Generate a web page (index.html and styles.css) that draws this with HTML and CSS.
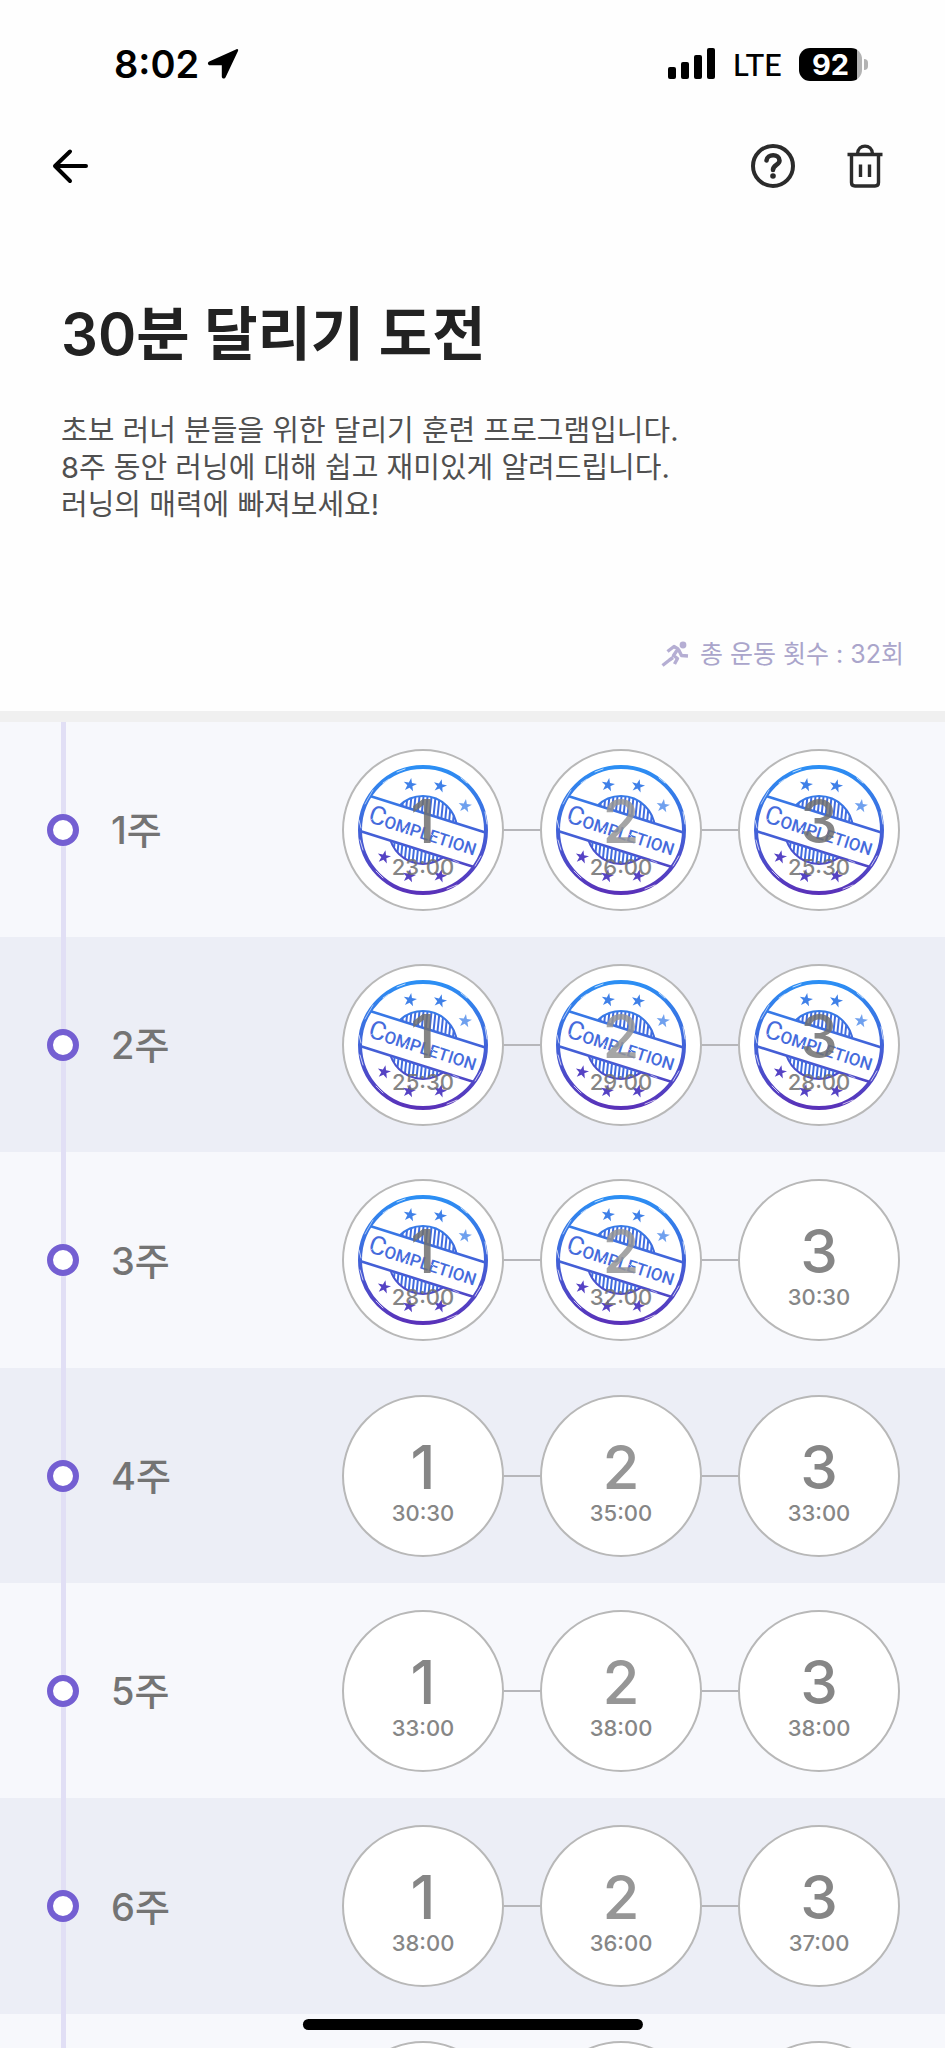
FILE: index.html
```html
<!DOCTYPE html>
<html lang="ko">

<head>
    <meta charset="utf-8">
    <meta name="viewport" content="width=device-width, initial-scale=1">
    <title>30분 달리기 도전</title>
    <link rel="stylesheet" href="styles.css">
</head>

<body>

    <!-- Shared stamp artwork -->
    <svg class="defs" width="0" height="0" aria-hidden="true">
        <defs>
            <linearGradient id="ink" gradientUnits="userSpaceOnUse" x1="0" y1="-65" x2="0" y2="65">
                <stop offset="0" stop-color="#2b90f5" />
                <stop offset="0.45" stop-color="#3f68dc" />
                <stop offset="1" stop-color="#5a30b8" />
            </linearGradient>
            <pattern id="hatch" width="4" height="8" patternUnits="userSpaceOnUse" patternTransform="rotate(6)">
                <rect width="2" height="8" fill="#3f6be0" />
            </pattern>
            <clipPath id="domeTop">
                <rect x="-40" y="-40" width="80" height="24" transform="rotate(17.5)" />
            </clipPath>
            <clipPath id="domeBottom">
                <rect x="-40" y="20" width="80" height="24" transform="rotate(17.5)" />
            </clipPath>
            <path id="star" d="M0-7 1.6-2.2 6.7-2.2 2.6.8 4.1 5.7 0 2.7-4.1 5.7-2.6.8-6.7-2.2-1.6-2.2Z" />
            <symbol id="stamp" viewBox="-66 -66 132 132">
                <g fill="none" stroke="url(#ink)">
                    <circle r="63" stroke-width="4" />
                    <path d="M-53-34 64 3M-63 1 51 37" stroke-width="2.6" />
                </g>
                <g clip-path="url(#domeTop)">
                    <circle r="34" fill="url(#hatch)" stroke="url(#ink)" stroke-width="2" />
                </g>
                <g clip-path="url(#domeBottom)">
                    <circle r="34" fill="url(#hatch)" stroke="url(#ink)" stroke-width="2" />
                </g>
                <g fill="#456bdc">
                    <text class="stamp-text" x="-56" y="9" transform="rotate(17.5)"><tspan class="stamp-cap">C</tspan>OMPLETION</text>
                </g>
                <g fill="#3f80e8">
                    <use href="#star" transform="translate(-13 -45) rotate(10)" />
                    <use href="#star" transform="translate(17 -44) rotate(14)" />
                    <use href="#star" transform="translate(42 -24) rotate(8)" opacity="0.75" />
                </g>
                <g fill="#5542c4">
                    <use href="#star" transform="translate(-39 27) rotate(12)" />
                    <use href="#star" transform="translate(-14 46) rotate(10)" />
                    <use href="#star" transform="translate(17 46) rotate(14)" />
                </g>
                <!-- worn ink -->
                <g fill="none" stroke="#fff" stroke-linecap="round" opacity="0.7">
                    <path d="M-40-47-34-51M-26-58-18-61M38-52 44-47M62-18 64-6M-64-10-62-2M-63 10-60 20M-47 41-40 48M24 59 34 55M52 36 58 26" stroke-width="1" />
                    <path d="M-58-26-50-40M30 30 36 33M-52-10-46-14M6 2 12 8M-20-4-14 2" stroke-width="0.8" />
                </g>
            </symbol>
        </defs>
    </svg>

    <div class="app">
        <div class="status-bar">
            <div class="status-left">
                <span class="clock">8:02</span>
                <svg width="32" height="32" viewBox="0 0 32 32" aria-hidden="true">
                    <path d="M29.500 1.200C30.800.8 31.600 1.800 31 3L18.600 29.200C17.700 31.200 14.800 30.800 14.800 28.400V17.200H3C.6 17.200.2 14.300 2.200 13.400Z" />
                </svg>
            </div>
            <div class="status-right">
                <svg width="48" height="32" viewBox="0 0 48 32" aria-hidden="true">
                    <rect x="0" y="19" width="8" height="12" rx="2" />
                    <rect x="13" y="14" width="8" height="17" rx="2" />
                    <rect x="26" y="7" width="8" height="24" rx="2" />
                    <rect x="39" y="0" width="8" height="31" rx="2" />
                </svg>
                <span class="network">LTE</span>
                <div class="battery"><span>92</span></div>
            </div>
        </div>

        <div class="app-bar">
            <button class="icon-button" aria-label="뒤로">
                <svg width="44" height="44" viewBox="0 0 44 44">
                    <path d="M37 22H7M21 7.500 6 22 21 37" fill="none" stroke="#000" stroke-width="4" stroke-linecap="round" stroke-linejoin="round" />
                </svg>
            </button>
            <div class="app-actions">
                <button class="icon-button" aria-label="도움말">
                    <svg width="44" height="44" viewBox="0 0 44 44" fill="none" stroke="#2b2b2b" stroke-width="4">
                        <circle cx="22" cy="22" r="20" />
                        <path d="M15.500 16.500C16 9.500 28.500 9.500 28.500 16.500 28.500 21 22 21 22 26" stroke-width="4.600" stroke-linecap="round" />
                        <circle cx="22" cy="32" r="2.800" fill="#2b2b2b" stroke="none" />
                    </svg>
                </button>
                <button class="icon-button" aria-label="삭제">
                    <svg width="44" height="44" viewBox="0 0 44 44" fill="none" stroke="#2b2b2b" stroke-width="3.400">
                        <path d="M4.500 10.500H39.500" />
                        <path d="M14.500 10C15 -.5 29 -.5 29.500 10" />
                        <path d="M8.500 11V38.500Q8.500 42 12 42H32Q35.500 42 35.500 38.500V11M17.500 20.500V33M26.500 20.500V33" />
                    </svg>
                </button>
            </div>
        </div>

        <div class="intro">
            <h1>30분 달리기 도전</h1>
            <p class="description">초보 러너 분들을 위한 달리기 훈련 프로그램입니다.<br>8주 동안 러닝에 대해 쉽고 재미있게 알려드립니다.<br>러닝의 매력에 빠져보세요!</p>
            <p class="total">
                <svg width="28" height="28" viewBox="0 0 28 28" fill="none" stroke="#b5aed3" stroke-width="3.400" stroke-linejoin="round" aria-hidden="true">
                    <circle cx="22" cy="5" r="3.400" fill="#b5aed3" stroke="none" />
                    <path d="M6.500 11.500 13 6.500 17 9 12.500 15.500 16.500 18.500 13.500 24M17.500 9.500 20.500 15.500 27 16M12 17.500 8.500 20 1.500 25.500" />
                </svg>
                <span>총 운동 횟수 : 32회</span>
            </p>
        </div>

        <div class="weeks" id="weeks"></div>
        <div class="home-indicator"></div>
    </div>

    <script src="script.js"></script>
</body>

</html>
```
FILE: styles.css
```css
* {
    box-sizing: border-box;
}

body {
    margin: 0;
    background-color: #fefefe;
    color: #222;
    font-family: Inter, "Noto Sans CJK KR", sans-serif;
}

button {
    border: none;
    padding: 0;
    font-family: inherit;
    cursor: pointer;
}

svg {
    display: block;
}

.defs {
    position: absolute;
}

.app {
    display: flex;
    flex-direction: column;
    height: 100vh;
    overflow: hidden;
}

/* Status bar */
.status-bar {
    display: flex;
    flex-shrink: 0;
    align-items: center;
    justify-content: space-between;
    height: 128px;
    padding: 0 83px 0 114px;
    color: #000;
}

.status-left {
    display: flex;
    align-items: center;
    gap: 8px;
}

.clock {
    font-size: 38px;
    font-weight: 600;
}

.status-right {
    display: flex;
    align-items: center;
    gap: 17px;
}

.network {
    font-family: Lato, sans-serif;
    font-size: 31px;
    font-weight: 500;
    line-height: 32px;
}

.battery {
    position: relative;
    width: 63px;
    height: 33px;
    border-radius: 11px;
    background: linear-gradient(to right, #000 58px, #b3b3b3 58px);
    color: #fff;
    font-size: 29px;
    font-weight: 700;
    line-height: 33px;
    text-align: center;
}

/* Battery tip */
.battery::after {
    content: "";
    position: absolute;
    right: -6px;
    top: 11px;
    width: 4px;
    height: 11px;
    border-radius: 0 5px 5px 0;
    background-color: #b3b3b3;
}

/* App bar */
.app-bar {
    display: flex;
    flex-shrink: 0;
    align-items: center;
    justify-content: space-between;
    height: 76px;
    padding: 0 58px 0 49px;
}

.app-actions {
    display: flex;
    gap: 48px;
}

.icon-button {
    background: none;
}

/* Program intro */
.intro {
    flex-shrink: 0;
    padding: 94px 41px 39px 61px;
    border-bottom: 11px solid #f0f0f0;
}

h1 {
    margin: 0;
    font-size: 58px;
    font-weight: 600;
    line-height: 72px;
}

.description {
    margin: 42px 0 0;
    color: #505050;
    font-size: 29px;
    line-height: 37px;
}

.total {
    display: flex;
    align-items: center;
    justify-content: flex-end;
    gap: 11px;
    margin: 113px 0 0;
    color: #aaa5cb;
    font-size: 25px;
    line-height: 36px;
}

/* Week list */
.weeks {
    flex: 1;
    overflow: hidden;
}

.week {
    display: flex;
    align-items: center;
    height: 215px;
    padding: 0 45px 0 47px;
    background-color: #f7f8fc;
}

.week:nth-child(even) {
    background-color: #eceef6;
}

.week:nth-child(3n) {
    height: 216px;
}

.rail {
    display: flex;
    flex-direction: column;
    align-items: center;
    align-self: stretch;
    width: 32px;
}

.rail::before,
.rail::after {
    content: "";
    flex: 1;
    width: 5px;
    background-color: #e1dff5;
}

.dot {
    width: 32px;
    height: 32px;
    border: 6px solid #745fd2;
    border-radius: 50%;
    background-color: #fff;
}

.week-name {
    margin: 0 auto 0 32px;
    padding-bottom: 4px;
    color: #747474;
    font-size: 38px;
    font-weight: 500;
}

.sessions {
    display: flex;
    margin: 0;
    padding: 0;
    list-style: none;
}

.sessions li {
    display: flex;
    align-items: center;
}

.sessions li + li::before {
    content: "";
    width: 36px;
    height: 2px;
    background-color: #b6b6ba;
}

.session {
    position: relative;
    display: flex;
    flex-direction: column;
    align-items: center;
    width: 162px;
    height: 162px;
    padding-top: 40px;
    border: 2px solid #b8b8b8;
    border-radius: 50%;
    background-color: #fff;
    color: #868686;
}

.number {
    font-size: 60px;
    font-weight: 500;
    line-height: 60px;
}

.sessions li:nth-child(2) .number {
    color: #969696;
}

.time {
    font-size: 22px;
    font-weight: 500;
    line-height: 32px;
}

.stamp {
    position: absolute;
    inset: 13px;
    width: 132px;
    height: 132px;
}

/* Labels stay readable on top of the stamp */
.stamp ~ .number,
.stamp ~ .time {
    position: relative;
    color: #707070;
    opacity: 0.85;
}

.stamp-text {
    font-family: Roboto, sans-serif;
    font-size: 17px;
    font-weight: 500;
}

.stamp-cap {
    font-size: 26px;
    font-weight: 400;
}

.home-indicator {
    position: fixed;
    left: 50%;
    bottom: 18px;
    width: 36%;
    height: 11px;
    border-radius: 6px;
    background-color: #000;
    transform: translateX(-50%);
}
```
FILE: script.js
```js
const weeks = [
    { name: '1주', times: ['23:00', '26:00', '25:30'], done: 3 },
    { name: '2주', times: ['25:30', '29:00', '28:00'], done: 3 },
    { name: '3주', times: ['28:00', '32:00', '30:30'], done: 2 },
    { name: '4주', times: ['30:30', '35:00', '33:00'], done: 0 },
    { name: '5주', times: ['33:00', '38:00', '38:00'], done: 0 },
    { name: '6주', times: ['38:00', '36:00', '37:00'], done: 0 },
    { name: '', times: ['', '', ''], done: 0 }
];

const stamp = '<svg class="stamp" aria-hidden="true"><use href="#stamp"/></svg>';

function renderSession(time, index, done) {
    const label = time ? `<span class="number">${index + 1}</span><span class="time">${time}</span>` : '';
    return `<li><button class="session">${index < done ? stamp : ''}${label}</button></li>`;
}

function renderWeek(week) {
    const sessions = week.times.map((time, i) => renderSession(time, i, week.done)).join('');
    return `<section class="week">
        <div class="rail"><span class="dot"></span></div>
        <span class="week-name">${week.name}</span>
        <ul class="sessions">${sessions}</ul>
    </section>`;
}

document.getElementById('weeks').innerHTML = weeks.map(renderWeek).join('');
```
